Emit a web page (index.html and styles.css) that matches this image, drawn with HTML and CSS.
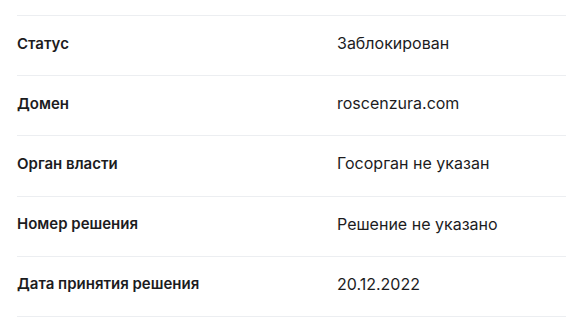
FILE: index.html
```html
<!DOCTYPE html>
<html lang="ru">
<head>
  <meta charset="UTF-8">
  <meta name="viewport" content="width=device-width, initial-scale=1">
  <title>Информация о блокировке</title>
  <link rel="stylesheet" href="styles.css">
</head>
<body>
  <div class="info-table">
    <div class="info-row">
      <div class="info-label">Статус</div>
      <div class="info-value">Заблокирован</div>
    </div>
    <div class="info-row">
      <div class="info-label">Домен</div>
      <div class="info-value">roscenzura.com</div>
    </div>
    <div class="info-row">
      <div class="info-label">Орган власти</div>
      <div class="info-value">Госорган не указан</div>
    </div>
    <div class="info-row">
      <div class="info-label">Номер решения</div>
      <div class="info-value">Решение не указано</div>
    </div>
    <div class="info-row">
      <div class="info-label">Дата принятия решения</div>
      <div class="info-value">20.12.2022</div>
    </div>
  </div>
</body>
</html>
```

FILE: styles.css
```css
body {
  margin: 0;
  background: #fff;
  color: #1c1c1e;
  font-family: Inter, "Noto Sans", sans-serif;
}

.info-table {
  margin: 15px 0 0 17px;
  border-top: 1px solid #eceef1;
}

/* each row: label column, value column, thin divider below */
.info-row {
  display: grid;
  grid-template-columns: 320px 1fr;
  align-items: center;
  box-sizing: border-box;
  height: 60.2px;
  padding-bottom: 5px;
  border-bottom: 1px solid #eceef1;
}

.info-label {
  font-size: 15px;
  font-weight: 600;
}

.info-value {
  font-size: 16px;
}
```
